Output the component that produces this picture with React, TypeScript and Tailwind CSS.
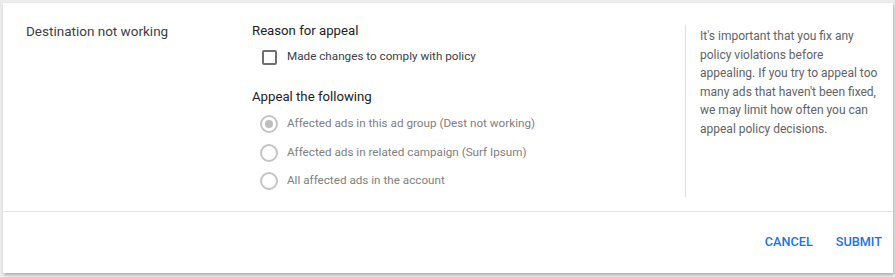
import React, { useState } from 'react';

const options = [
  'Affected ads in this ad group (Dest not working)',
  'Affected ads in related campaign (Surf Ipsum)',
  'All affected ads in the account',
];

const App: React.FC = () => {
  const [checked, setChecked] = useState(false);

  return (
    <div
      className="w-[895px] h-[277px] bg-[#ededed] pt-[3px] pl-[3px]"
      style={{ fontFamily: 'Roboto, "Liberation Sans", sans-serif' }}
    >
      <div className="w-[890px] h-[270px] bg-white shadow-[1px_2px_3px_rgba(0,0,0,0.28)] flex flex-col">
        {/* Body */}
        <div className="h-[209px] flex border-b border-[#e6e6e6]">
          <div className="w-[249px] pl-[23px] pt-[18px] text-[13.5px] leading-[20px] text-[#3c4043]">
            Destination not working
          </div>

          <div className="flex-1 pt-[18px]">
            <div className="text-[13.2px] leading-[20px] text-[#202124]">Reason for appeal</div>
            <label
              className="mt-[6px] h-[20px] flex items-center pl-[10px] cursor-pointer"
              onClick={() => setChecked(!checked)}
            >
              <span
                className={`w-[15px] h-[15px] border-2 rounded-[2px] ${
                  checked ? 'border-[#1a73e8] bg-[#1a73e8]' : 'border-[#6f6f6f]'
                }`}
              />
              <span className="ml-[10px] text-[11.7px] text-[#3c4043]">Made changes to comply with policy</span>
            </label>

            <div className="mt-[20px] text-[13.2px] leading-[20px] text-[#202124]">Appeal the following</div>
            <div className="mt-[3px] flex flex-col">
              {options.map((o, i) => (
                <div key={o} className="h-[28.5px] flex items-center pl-[8px]">
                  <span className="w-[18px] h-[18px] rounded-full border-2 border-[#c4c4c4] flex items-center justify-center">
                    {i === 0 && <span className="w-[8px] h-[8px] rounded-full bg-[#bdbdbd]" />}
                  </span>
                  <span className="ml-[9px] text-[11.7px] text-[#808080]">{o}</span>
                </div>
              ))}
            </div>
          </div>

          <div className="w-[208px] mt-[22px] mb-[14px] border-l border-[#e0e0e0] pl-[14px] pr-[13px] pt-[2px] text-[12px] leading-[18.5px] text-[#5f6368]">
            It's important that you fix any policy violations before appealing. If you try to appeal too many ads
            that haven't been fixed, we may limit how often you can appeal policy decisions.
          </div>
        </div>

        {/* Footer */}
        <div className="flex-1 flex items-center justify-end pr-[11px] gap-[23px] pb-[1px]">
          <button className="text-[12.7px] font-medium text-[#1a73e8]">CANCEL</button>
          <button className="text-[12.7px] font-medium text-[#1a73e8]">SUBMIT</button>
        </div>
      </div>
    </div>
  );
};

export default App;
